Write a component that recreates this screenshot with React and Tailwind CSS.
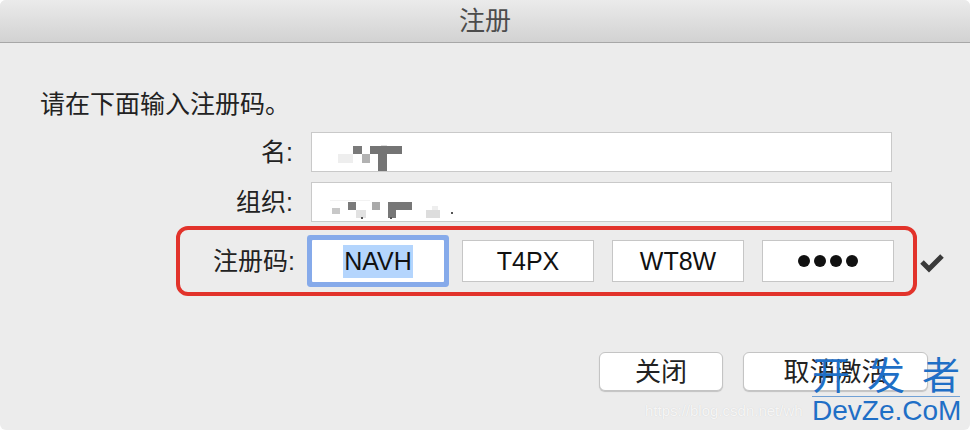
import React from 'react';

const FONT = { fontFamily: '"Liberation Sans", "Noto Sans CJK SC", sans-serif' };

// pixelated (mosaic) blur used for the hidden name / org fields
const NameMosaic = () => (
  <svg width="70" height="28" viewBox="0 0 70 28">
    <rect x="1" y="9" width="15" height="9" fill="#eeeeee" />
    <rect x="16" y="1" width="9" height="8" fill="#7a7a7a" />
    <rect x="25" y="9" width="8" height="9" fill="#b2b2b2" />
    <rect x="33" y="1" width="32" height="8" fill="#747474" />
    <rect x="41" y="9" width="9" height="17" fill="#747474" />
    <rect x="44" y="0" width="6" height="1" fill="#dddddd" />
  </svg>
);

const OrgMosaic = () => (
  <svg width="130" height="22" viewBox="0 0 130 22">
    <rect x="0" y="0" width="40" height="1" fill="#f2f2f2" />
    <rect x="2" y="8" width="8" height="6" fill="#c8c8c8" />
    <rect x="18" y="2" width="8" height="8" fill="#7a7a7a" />
    <rect x="26" y="10" width="10" height="8" fill="#e2e2e2" />
    <rect x="42" y="2" width="8" height="8" fill="#aaaaaa" />
    <rect x="58" y="2" width="24" height="8" fill="#777777" />
    <rect x="58" y="10" width="8" height="8" fill="#777777" />
    <rect x="96" y="10" width="14" height="8" fill="#dddddd" />
    <rect x="102" y="6" width="6" height="4" fill="#eeeeee" />
    <rect x="121" y="12" width="2" height="2" fill="#555555" />
    <rect x="31" y="17" width="2" height="2" fill="#555555" />
    <rect x="60" y="17" width="2" height="2" fill="#555555" />
  </svg>
);

const CheckMark = () => (
  <svg width="26" height="22" viewBox="0 0 26 22">
    <path d="M3 11 L10 18 L23 5" fill="none" stroke="#3a3a3a" strokeWidth="5" strokeLinejoin="miter" />
  </svg>
);

function FieldRow({ label, children }) {
  return (
    <div className="flex items-center h-[40px]">
      <div className="w-[253px] text-right text-[25px] leading-[30px] text-[#222]">{label}</div>
      <div className="ml-[18px] w-[581px] h-[40px] bg-white border border-[#c9c9c9] pl-[25px] flex items-start">
        {children}
      </div>
    </div>
  );
}

function CodeBox({ children, focused }) {
  return (
    <div
      className={
        focused
          ? 'w-[132px] h-[42px] bg-white rounded-[1px] shadow-[0_0_0_5px_#86aaea] flex items-center justify-center'
          : 'w-[132px] h-[42px] bg-white border border-[#c6c6c6] flex items-center justify-center'
      }
    >
      {children}
    </div>
  );
}

export default function App() {
  return (
    <div className="w-[970px] h-[430px] bg-white" style={FONT}>
      <div className="w-[970px] h-[430px] bg-[#ececec] rounded-[6px] overflow-hidden relative flex flex-col">
        {/* title bar */}
        <div className="h-[43px] shrink-0 bg-gradient-to-b from-[#ebebeb] to-[#d2d2d2] border-b border-[#a7a7a7] flex items-center justify-center text-[26px] text-[#4c4c4c]">
          注册
        </div>

        <div className="pl-[40px] pt-[46px]">
          <div className="text-[25px] leading-[30px] text-[#222]">请在下面输入注册码。</div>

          <div className="mt-[13px] flex flex-col gap-[10px]">
            <FieldRow label="名:">
              <div className="mt-[12px]">
                <NameMosaic />
              </div>
            </FieldRow>
            <FieldRow label="组织:">
              <div className="mt-[17px] -ml-[7px]">
                <OrgMosaic />
              </div>
            </FieldRow>
          </div>

          <div className="mt-[4px] flex items-center">
            <div className="ml-[136px] w-[741px] h-[70px] border-4 border-[#e2332b] rounded-[12px] flex items-center">
              <div className="w-[115px] text-right text-[25px] leading-[30px] text-[#222]">注册码:</div>
              <div className="ml-[17px] flex gap-[18px]">
                <CodeBox focused>
                  <span className="bg-[#b4d5fd] text-[25px] leading-[33px] text-[#111] px-[1px]">NAVH</span>
                </CodeBox>
                <CodeBox>
                  <span className="text-[25px] leading-[33px] text-[#111]">T4PX</span>
                </CodeBox>
                <CodeBox>
                  <span className="text-[25px] leading-[33px] text-[#111]">WT8W</span>
                </CodeBox>
                <CodeBox>
                  <div className="flex gap-[4px]">
                    <div className="w-[12px] h-[12px] rounded-full bg-[#111]" />
                    <div className="w-[12px] h-[12px] rounded-full bg-[#111]" />
                    <div className="w-[12px] h-[12px] rounded-full bg-[#111]" />
                    <div className="w-[12px] h-[12px] rounded-full bg-[#111]" />
                  </div>
                </CodeBox>
              </div>
            </div>
            <div className="ml-[2px] mt-[2px]">
              <CheckMark />
            </div>
          </div>
        </div>

        {/* buttons */}
        <div className="mt-[56px] flex justify-end gap-[20px] pr-[42px]">
          <button className="w-[124px] h-[39px] bg-white border border-[#c4c4c4] rounded-[6px] shadow-[0_1px_1px_rgba(0,0,0,0.18)] text-[26px] text-[#222] leading-none">
            关闭
          </button>
          <button className="w-[185px] h-[39px] bg-white border border-[#c4c4c4] rounded-[6px] shadow-[0_1px_1px_rgba(0,0,0,0.18)] text-[26px] text-[#222] leading-none">
            取消激活
          </button>
        </div>

        {/* watermarks */}
        <div className="absolute left-[645px] top-[400px] whitespace-nowrap text-[15px] text-white/80 [text-shadow:0_0_1px_rgba(0,0,0,0.15)]">
          https://blog.csdn.net/wh
        </div>
        <div className="absolute left-[812px] top-[356px] w-[158px] flex flex-col items-start text-[#1f6fc6] whitespace-nowrap">
          <div className="text-[38px] leading-[40px] tracking-[17px]">开发者</div>
          <div className="w-[148px] h-px bg-[#1f6fc6]/60" />
          <div className="text-[28px] leading-[30px] -mt-[1px]">DevZe.CoM</div>
        </div>
      </div>
    </div>
  );
}
